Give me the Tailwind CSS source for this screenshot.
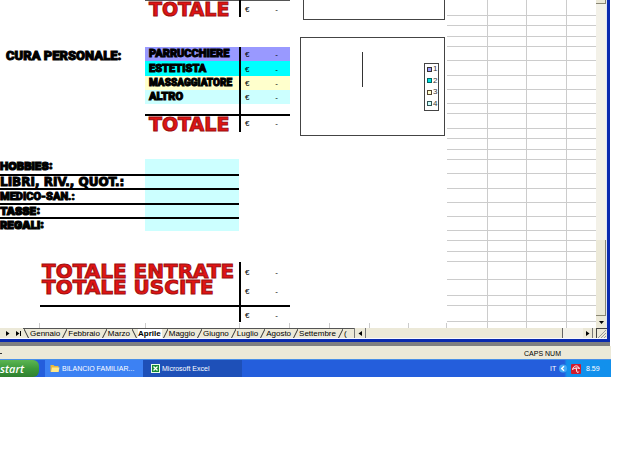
<!DOCTYPE html>
<html lang="it">
<head>
<meta charset="utf-8">
<title>Bilancio familiare</title>
<script src="https://cdn.jsdelivr.net/npm/@tailwindcss/browser@4"></script>
</head>
<body class="bg-white font-['Liberation_Sans',sans-serif] text-black">
<div class="mr-[21px] overflow-hidden">
  <main class="mr-px border-r-[3px] border-b-[3px] border-[#0a2aae]">
    <div class="flex h-[328px] overflow-hidden">
      <section class="flex w-[290px] shrink-0 flex-col whitespace-nowrap" aria-label="Spese">
        <table class="ml-[145px] w-[145px] table-fixed border-collapse text-[8px] leading-none">
          <tr class="h-4 border-t border-[#555]">
            <th class="w-[95px] border-r-2 border-black p-0 pl-1 text-left font-['DejaVu_Sans',sans-serif] text-[19px] leading-4 font-bold text-[#e01414] [-webkit-text-stroke:1px_#a01010]">TOTALE</th>
            <td class="p-0 px-1 pt-[2px]"><div class="flex justify-between pr-2"><span>€</span><span>-</span></div></td>
          </tr>
        </table>
        <div class="mt-[30px] flex">
          <h2 class="w-[145px] pt-px pl-[6px] font-['Roboto',sans-serif] text-[13px] leading-4 font-black [-webkit-text-stroke:1px_#000]">CURA PERSONALE:</h2>
          <table class="w-[145px] table-fixed border-collapse text-[8px] leading-none">
            <tr class="h-[14px] bg-[#9999ff]">
              <th class="w-[95px] border-r-2 border-black p-0 pl-1 text-left font-['Roboto',sans-serif] text-[11px] leading-[14px] font-black [-webkit-text-stroke:1px_#000]">PARRUCCHIERE</th>
              <td class="p-0 px-1 pt-[2px]"><div class="flex justify-between pr-2"><span>€</span><span>-</span></div></td>
            </tr>
            <tr class="h-[15px] bg-[#00ffff]">
              <th class="border-r-2 border-black p-0 pl-1 text-left font-['Roboto',sans-serif] text-[11px] leading-[15px] font-black [-webkit-text-stroke:1px_#000]">ESTETISTA</th>
              <td class="p-0 px-1 pt-[2px]"><div class="flex justify-between pr-2"><span>€</span><span>-</span></div></td>
            </tr>
            <tr class="h-[14px] bg-[#ffffcc]">
              <th class="border-r-2 border-black p-0 pl-1 text-left font-['Roboto',sans-serif] text-[10px] leading-[14px] font-black [-webkit-text-stroke:1px_#000]">MASSAGGIATORE</th>
              <td class="p-0 px-1 pt-[2px]"><div class="flex justify-between pr-2"><span>€</span><span>-</span></div></td>
            </tr>
            <tr class="h-[14px] bg-[#ccffff]">
              <th class="border-r-2 border-black p-0 pl-1 text-left font-['Roboto',sans-serif] text-[11px] leading-[14px] font-black [-webkit-text-stroke:1px_#000]">ALTRO</th>
              <td class="p-0 px-1 pt-[2px]"><div class="flex justify-between pr-2"><span>€</span><span>-</span></div></td>
            </tr>
            <tr class="h-[11px]"><td class="border-r-2 border-black p-0"></td><td class="p-0"></td></tr>
            <tr class="h-[17px] border-t-2 border-black">
              <th class="border-r-2 border-black p-0 pl-1 text-left font-['DejaVu_Sans',sans-serif] text-[19px] leading-4 font-bold text-[#e01414] [-webkit-text-stroke:1px_#a01010]">TOTALE</th>
              <td class="p-0 px-1"><div class="flex justify-between pr-2"><span>€</span><span>-</span></div></td>
            </tr>
          </table>
        </div>
        <table class="mt-[27px] w-[239px] table-fixed border-collapse font-['Inter',sans-serif] text-[12px]">
          <tr class="h-4 border-b-2 border-black"><th class="w-[145px] p-0 text-left text-[11px] leading-[13px] font-black [-webkit-text-stroke:1px_#000]">HOBBIES:</th><td class="bg-[#ccffff] p-0"></td></tr>
          <tr class="h-[14px] border-b-2 border-black"><th class="p-0 text-left font-['DejaVu_Sans',sans-serif] text-[12px] leading-[12px] font-bold [-webkit-text-stroke:1px_#000]">LIBRI, RIV., QUOT.:</th><td class="bg-[#ccffff] p-0"></td></tr>
          <tr class="h-[15px] border-b-2 border-black"><th class="p-0 text-left font-['Roboto',sans-serif] text-[11px] leading-[13px] font-black [-webkit-text-stroke:1px_#000]">MEDICO-SAN.:</th><td class="bg-[#ccffff] p-0"></td></tr>
          <tr class="h-[14px] border-b-2 border-black"><th class="p-0 text-left text-[11px] leading-[12px] font-black [-webkit-text-stroke:1px_#000]">TASSE:</th><td class="bg-[#ccffff] p-0"></td></tr>
          <tr class="h-3"><th class="p-0 text-left text-[11px] leading-3 font-black [-webkit-text-stroke:1px_#000]">REGALI:</th><td class="bg-[#ccffff] p-0"></td></tr>
        </table>
        <table class="mt-[31px] ml-10 w-[250px] table-fixed border-collapse text-[8px] leading-none">
          <tr class="h-[17px]">
            <th class="w-[200px] border-r-2 border-black p-0 pl-[2px] text-left font-['DejaVu_Sans',sans-serif] text-[20px] leading-4 font-bold text-[#e01414] [-webkit-text-stroke:1px_#a01010]">TOTALE ENTRATE</th>
            <td class="p-0 px-1 pt-1"><div class="flex justify-between pr-2"><span>€</span><span>-</span></div></td>
          </tr>
          <tr class="h-[27px] border-b-2 border-black">
            <th class="border-r-2 border-black p-0 pl-[2px] text-left align-top font-['DejaVu_Sans',sans-serif] text-[20px] leading-4 font-bold text-[#e01414] [-webkit-text-stroke:1px_#a01010]">TOTALE USCITE</th>
            <td class="p-0 px-1"><div class="flex justify-between pr-2"><span>€</span><span>-</span></div></td>
          </tr>
          <tr class="h-4">
            <td class="border-r-2 border-black p-0"></td>
            <td class="p-0 px-1 pt-[2px]"><div class="flex justify-between pr-2"><span>€</span><span>-</span></div></td>
          </tr>
        </table>
        <div class="mt-auto flex h-[5px]" aria-hidden="true"><i class="w-10 border-r border-[#ccc]"></i><i class="w-[106px] border-r border-[#ccc]"></i><i class="w-[94px] border-r border-[#ccc]"></i><i class="w-[50px] border-r border-[#ccc]"></i></div>
      </section>
      <section class="flex w-[157px] shrink-0 flex-col pl-[10px]" aria-label="Grafici">
        <div class="ml-[3px] h-5 w-[142px] border border-t-0 border-[#444]"></div>
        <figure class="mt-[17px] flex h-[99px] w-[145px] items-center justify-end border border-[#444] pr-[5px]">
          <div class="mr-[61px] mb-[34px] h-[35px] w-px bg-[#333]"></div>
          <ul class="flex h-12 w-[15px] flex-col justify-around border border-[#444] pl-[2px] text-[8px] leading-none text-[#333]">
            <li class="flex items-center gap-px"><i class="size-[5px] border border-[#333] bg-[#9999ff]"></i>1</li>
            <li class="flex items-center gap-px"><i class="size-[5px] border border-[#066] bg-[#00e0e0]"></i>2</li>
            <li class="flex items-center gap-px"><i class="size-[5px] border border-[#543] bg-[#ffffcc]"></i>3</li>
            <li class="flex items-center gap-px"><i class="size-[5px] border border-[#355] bg-[#ccffff]"></i>4</li>
          </ul>
        </figure>
        <div class="mt-auto flex h-[5px]" aria-hidden="true"><i class="w-[30px] border-r border-[#ccc]"></i><i class="w-10 border-r border-[#ccc]"></i><i class="w-[39px] border-r border-[#ccc]"></i><i class="flex-1 border-r border-[#ccc]"></i></div>
      </section>
      <table class="min-w-0 flex-1 table-fixed border-collapse" aria-label="Celle vuote">
        <colgroup><col class="w-10"><col class="w-[39px]"><col class="w-10"><col></colgroup>
        <tbody id="cells"></tbody>
      </table>
      <div class="flex w-[11px] shrink-0 flex-col border-r border-[#dfe6f5] bg-[#f3f1e8]" aria-hidden="true">
        <div class="h-1 border-r border-b border-[#8a8774] bg-[#ece9d8]"></div>
        <div class="mt-[236px] h-[76px] border-r border-b border-[#8a8774] bg-[#ece9d8]"></div>
        <div class="flex flex-1 items-center justify-center bg-[#ece9d8]"><svg width="5" height="3" viewBox="0 0 5 3"><path d="M0 0h5L2.500 3z"/></svg></div>
      </div>
    </div>
    <div class="flex h-[11px] items-stretch overflow-hidden border-b border-[#f8f8ff] bg-[#ece9d8] text-[8px] leading-[11px] whitespace-nowrap">
      <button class="w-[11px] pl-[6px]" aria-label="Foglio successivo"><svg width="4" height="5" viewBox="0 0 4 5"><path d="M0 0v5L3.500 2.500z"/></svg></button>
      <button class="w-3 pl-[5px]" aria-label="Ultimo foglio"><svg width="6" height="5" viewBox="0 0 6 5"><path d="M0 0v5L3.500 2.500zM4 0h1v5H4z"/></svg></button>
      <nav id="tabs" class="flex w-[331px] shrink-0 border-t border-[#555] leading-[10px]"></nav>
      <button class="flex w-3 items-center justify-center border-x border-[#777]" aria-label="Scorri a sinistra"><svg width="4" height="5" viewBox="0 0 4 5"><path d="M4 0v5L.500 2.500z"/></svg></button>
      <div class="flex-1 border-r border-[#666] bg-[#ece9d8]"></div>
      <div class="w-[20px] bg-[#f3f1e8]"></div>
      <button class="flex w-[10px] items-center justify-center border-r border-[#777]" aria-label="Scorri a destra"><svg width="4" height="5" viewBox="0 0 4 5"><path d="M0 0v5L3.500 2.500z"/></svg></button>
      <div class="ml-[3px] w-[11px] border-t border-l border-[#444]"><svg width="9" height="9" viewBox="0 0 9 9"><path d="M1 9l8-8M4 9l5-5M7 9l2-2" stroke="#999" fill="none"/></svg></div>
    </div>
  </main>
  <div class="mr-px h-[4px] bg-[#808080]"></div>
  <footer class="flex h-[13px] items-center justify-between bg-[#ece9d8] pt-[2px] pr-[50px] text-[7px] leading-none">
    <span class="h-px w-[2px] bg-[#333]"></span>
    <span>CAPS NUM</span>
  </footer>
  <div class="flex h-[18px] items-stretch border-t border-[#4a90e8] bg-[#245edc] text-[7px] leading-none text-white">
    <button class="w-[39px] rounded-r-md bg-linear-to-b from-[#5cb552] via-[#3c9a3a] to-[#2f8030] text-left font-['Open_Sans',sans-serif] text-[11px] leading-[15px] font-semibold italic">start</button>
    <button class="ml-[6px] flex w-[98px] items-center gap-[2px] bg-[#3c81f3] pl-[5px] whitespace-nowrap">
      <svg class="shrink-0" width="10" height="9" viewBox="0 0 10 9"><path d="M.500 1h3l1 1h4v6h-8z" fill="#e8b93c"/><path d="M2 3.500h7.500L8.500 8H1z" fill="#ffe88a"/></svg>BILANCIO FAMILIAR...
    </button>
    <button class="flex w-[99px] items-center gap-[2px] bg-[#1e50b8] pl-2 whitespace-nowrap">
      <svg width="9" height="9" viewBox="0 0 9 9"><path d="M0 0h9v9H0z" fill="#e8ffe8"/><path d="M1 1h7v7H1z" fill="#178a35"/><path d="M2.500 2.500l4 4M6.500 2.500l-4 4" stroke="#fff" stroke-width="1.300"/></svg>Microsoft Excel
    </button>
    <div class="flex-1"></div>
    <span class="w-[9px] self-center">IT</span>
    <div class="flex w-[52px] items-center gap-[4px] bg-linear-to-r from-[#245edc] from-10% to-[#1290ec] to-15%">
      <svg width="8" height="9" viewBox="0 0 8 9"><circle cx="4" cy="4.500" r="4" fill="#45a8f5"/><path d="M5 2.200L2.700 4.500 5 6.800" stroke="#fff" stroke-width="1.400" fill="none"/></svg>
      <svg width="10" height="10" viewBox="0 0 10 10"><rect width="10" height="10" rx="1" fill="#d01c2c"/><path d="M1.500 5.500C2 2 6.500 0 8.500 4.500 6.500 3.500 3.500 3.800 1.500 5.500zM5 4l1 4c.3.800 1.500.600 1.700-.300" fill="none" stroke="#fff"/></svg>
      <time class="ml-px">8.59</time>
    </div>
  </div>
</div>
<script>
  const heights = [15,10,11,10,14,15,14,14,10,15,10,11,10,14,15,14,14,14,10,11,10,18,16,10,16,7];
  document.getElementById('cells').innerHTML = heights.map((h, i) => {
    const last = i === heights.length - 1;
    const cell = 'border-[#ccc] p-0 ' + (last ? '' : 'border-b ');
    return `<tr style="height:${h}px">` + [0, 1, 2, 3].map(c => `<td class="${cell}${c < 3 ? 'border-r' : ''}"></td>`).join('') + '</tr>';
  }).join('');
  const months = ['Gennaio', 'Febbraio', 'Marzo', 'Aprile', 'Maggio', 'Giugno', 'Luglio', 'Agosto', 'Settembre', '('];
  const slash = d => `<svg class="mx-px shrink-0" width="5" height="10" viewBox="0 0 5 10" aria-hidden="true"><path d="${d}" stroke="#333" fill="none"/></svg>`;
  document.getElementById('tabs').innerHTML = slash('M0 0l5 10') + months.map((m, i) => {
    const sep = i === 9 ? '' : slash(i === 2 ? 'M0 0l5 10' : 'M5 0L0 10');
    return `<a href="#" class="pr-px ${m === 'Aprile' ? 'bg-white font-bold' : ''}">${m}</a>${sep}`;
  }).join('');
</script>
</body>
</html>
